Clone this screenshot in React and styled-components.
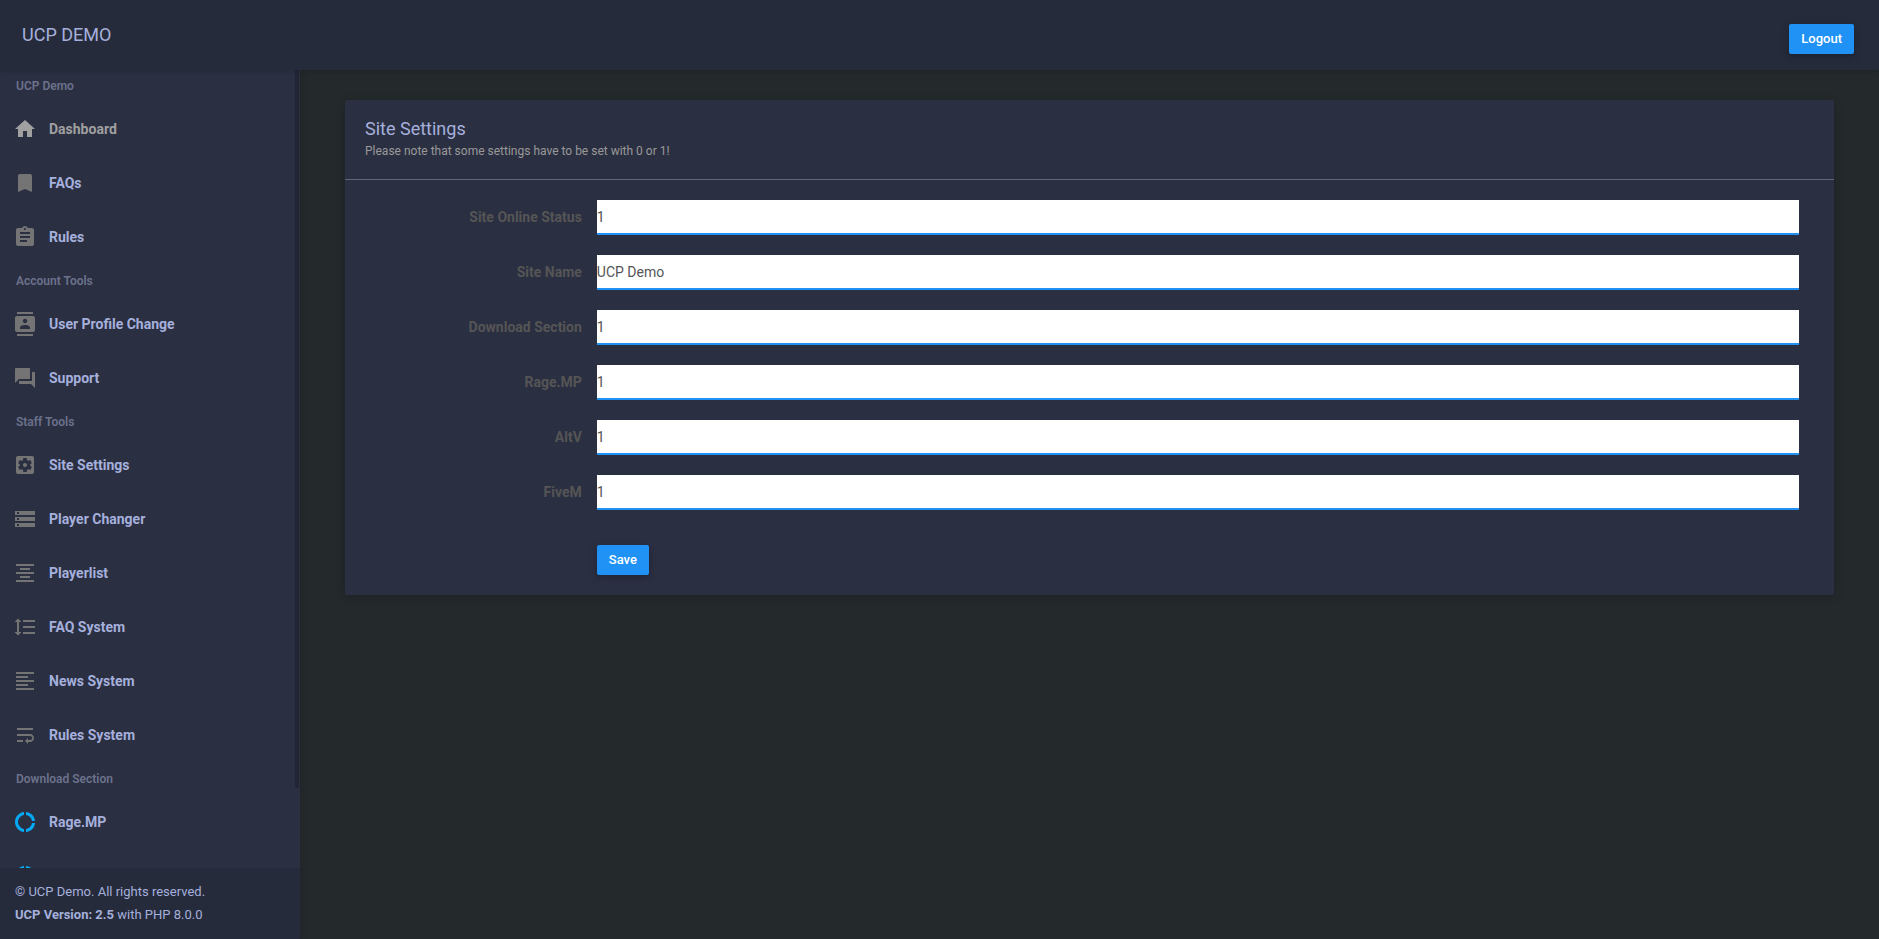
import React from 'react';
import styled, { createGlobalStyle } from 'styled-components';
import {
  MdHome,
  MdBookmark,
  MdAssignment,
  MdContacts,
  MdForum,
  MdSettingsApplications,
  MdStorage,
  MdFormatAlignCenter,
  MdFormatLineSpacing,
  MdFormatAlignLeft,
  MdWrapText,
  MdDonutLarge,
} from 'react-icons/md';

const color = {
  page: '#24292c',
  bar: '#262b3b',
  panel: '#2b2f42',
  text: '#a5b0dc',
  muted: '#6c728c',
  icon: '#747474',
  active: '#a0a0a0',
  label: '#555555',
  blue: '#2092f5',
  download: '#03a9f4',
};

const GlobalStyle = createGlobalStyle`
  *, *::before, *::after { box-sizing: border-box; }
  body {
    margin: 0;
    background: ${color.page};
    color: ${color.text};
    font-family: Roboto, Arial, sans-serif;
    font-size: 14px;
  }
`;

const Shell = styled.div`
  display: flex;
  flex-direction: column;
  height: 100vh;
`;

const TopBar = styled.header`
  position: relative;
  z-index: 2;
  flex: none;
  display: flex;
  align-items: flex-start;
  justify-content: space-between;
  height: 69px;
  padding: 24px 25px 0 22px;
  background: ${color.bar};
  box-shadow: 0 1px 0 ${color.bar}, 0 2px 5px rgba(0, 0, 0, 0.2);
`;

const Brand = styled.a`
  color: ${color.text};
  font-size: 18px;
  line-height: 21px;
  text-decoration: none;
`;

const Button = styled.button`
  height: 30px;
  padding: 0 12px;
  border: none;
  border-radius: 2px;
  background: ${color.blue};
  color: #fff;
  font-family: inherit;
  font-size: 13px;
  font-weight: 500;
  line-height: 18px;
  box-shadow: 0 2px 5px rgba(0, 0, 0, 0.16), 0 2px 10px rgba(0, 0, 0, 0.12);
  cursor: pointer;
`;

const Body = styled.div`
  flex: 1;
  display: flex;
  min-height: 0;
`;

const Sidebar = styled.aside`
  flex: none;
  display: flex;
  flex-direction: column;
  width: 300px;
  background: ${color.panel};
  box-shadow: 2px 2px 5px rgba(0, 0, 0, 0.1);
`;

const MenuArea = styled.nav`
  position: relative;
  flex: 1;
  min-height: 0;
  overflow: hidden;
`;

const ScrollThumb = styled.div`
  position: absolute;
  top: 0;
  right: 1px;
  width: 4px;
  height: 90%;
  background: rgba(0, 0, 0, 0.2);
`;

const MenuHeading = styled.h2`
  margin: 0;
  padding: 9px 16px 7px;
  color: ${color.muted};
  font-size: 12px;
  font-weight: 600;
  line-height: 17px;
`;

const MenuList = styled.ul`
  margin: 0;
  padding: 0;
  list-style: none;
`;

const MenuLink = styled.a`
  display: flex;
  align-items: center;
  gap: 12px;
  height: 54px;
  padding: 0 13px;
  color: ${(p) => (p.$active ? color.active : color.text)};
  font-weight: 700;
  text-decoration: none;

  svg {
    width: 24px;
    height: 24px;
    color: ${(p) => (p.$active ? color.active : p.$download ? color.download : color.icon)};
  }
`;

const Legal = styled.footer`
  flex: none;
  padding: 12px 15px 13px;
  background: ${color.bar};
  font-size: 13px;
  line-height: 23px;

  p { margin: 0; }
`;

const Content = styled.main`
  flex: 1;
  min-width: 0;
  padding: 31px 45px;
  overflow: auto;
`;

const Card = styled.section`
  border-radius: 2px;
  background: ${color.panel};
  box-shadow: 0 2px 10px rgba(0, 0, 0, 0.2);
`;

const CardHeader = styled.div`
  padding: 20px;
  border-bottom: 1px solid #63647a;
`;

const CardTitle = styled.h1`
  margin: 0 0 6px;
  font-size: 18px;
  font-weight: 400;
  line-height: 18px;
`;

const CardNote = styled.p`
  margin: 0;
  color: #999;
  font-size: 12px;
  line-height: 15px;
`;

const Form = styled.form`
  display: flex;
  flex-direction: column;
  gap: 20px;
  padding: 20px 35px 20px 5px;
`;

const Row = styled.div`
  display: grid;
  grid-template-columns: 16% 1fr;
  column-gap: 15px;
  align-items: center;
`;

const Label = styled.label`
  padding-bottom: 2px;
  color: ${color.label};
  font-weight: 700;
  text-align: right;
`;

const Input = styled.input`
  width: 100%;
  height: 35px;
  padding: 0;
  border: none;
  border-bottom: 2px solid ${color.blue};
  border-radius: 0;
  outline: none;
  background: #fff;
  color: #555;
  font-family: inherit;
  font-size: 14px;
`;

const Actions = styled(Row)`
  padding-top: 15px;

  button {
    grid-column: 2;
    justify-self: start;
  }
`;

const menu = [
  {
    heading: 'UCP Demo',
    items: [
      { label: 'Dashboard', Icon: MdHome, active: true },
      { label: 'FAQs', Icon: MdBookmark },
      { label: 'Rules', Icon: MdAssignment },
    ],
  },
  {
    heading: 'Account Tools',
    items: [
      { label: 'User Profile Change', Icon: MdContacts },
      { label: 'Support', Icon: MdForum },
    ],
  },
  {
    heading: 'Staff Tools',
    items: [
      { label: 'Site Settings', Icon: MdSettingsApplications },
      { label: 'Player Changer', Icon: MdStorage },
      { label: 'Playerlist', Icon: MdFormatAlignCenter },
      { label: 'FAQ System', Icon: MdFormatLineSpacing },
      { label: 'News System', Icon: MdFormatAlignLeft },
      { label: 'Rules System', Icon: MdWrapText },
    ],
  },
  {
    heading: 'Download Section',
    items: [
      { label: 'Rage.MP', Icon: MdDonutLarge, download: true },
      { label: 'AltV', Icon: MdDonutLarge, download: true, iconOnly: true },
    ],
  },
];

const fields = [
  { id: 'online', label: 'Site Online Status', value: '1' },
  { id: 'name', label: 'Site Name', value: 'UCP Demo' },
  { id: 'download', label: 'Download Section', value: '1' },
  { id: 'ragemp', label: 'Rage.MP', value: '1' },
  { id: 'altv', label: 'AltV', value: '1' },
  { id: 'fivem', label: 'FiveM', value: '1' },
];

export default function App() {
  return (
    <>
      <GlobalStyle />
      <Shell>
        <TopBar>
          <Brand href="#">UCP DEMO</Brand>
          <Button type="button">Logout</Button>
        </TopBar>
        <Body>
          <Sidebar>
            <MenuArea>
              {menu.map(({ heading, items }) => (
                <React.Fragment key={heading}>
                  <MenuHeading>{heading}</MenuHeading>
                  <MenuList>
                    {items.map(({ label, Icon, active, download, iconOnly }) => (
                      <li key={label}>
                        <MenuLink
                          href="#"
                          $active={active}
                          $download={download}
                          aria-label={iconOnly ? label : undefined}
                        >
                          <Icon aria-hidden="true" />
                          {!iconOnly && <span>{label}</span>}
                        </MenuLink>
                      </li>
                    ))}
                  </MenuList>
                </React.Fragment>
              ))}
              <ScrollThumb />
            </MenuArea>
            <Legal>
              <p>© UCP Demo. All rights reserved.</p>
              <p>
                <b>UCP Version: 2.5</b> with PHP 8.0.0
              </p>
            </Legal>
          </Sidebar>
          <Content>
            <Card>
              <CardHeader>
                <CardTitle>Site Settings</CardTitle>
                <CardNote>Please note that some settings have to be set with 0 or 1!</CardNote>
              </CardHeader>
              <Form onSubmit={(e) => e.preventDefault()}>
                {fields.map(({ id, label, value }) => (
                  <Row key={id}>
                    <Label htmlFor={id}>{label}</Label>
                    <Input id={id} type="text" defaultValue={value} />
                  </Row>
                ))}
                <Actions>
                  <Button type="submit">Save</Button>
                </Actions>
              </Form>
            </Card>
          </Content>
        </Body>
      </Shell>
    </>
  );
}
